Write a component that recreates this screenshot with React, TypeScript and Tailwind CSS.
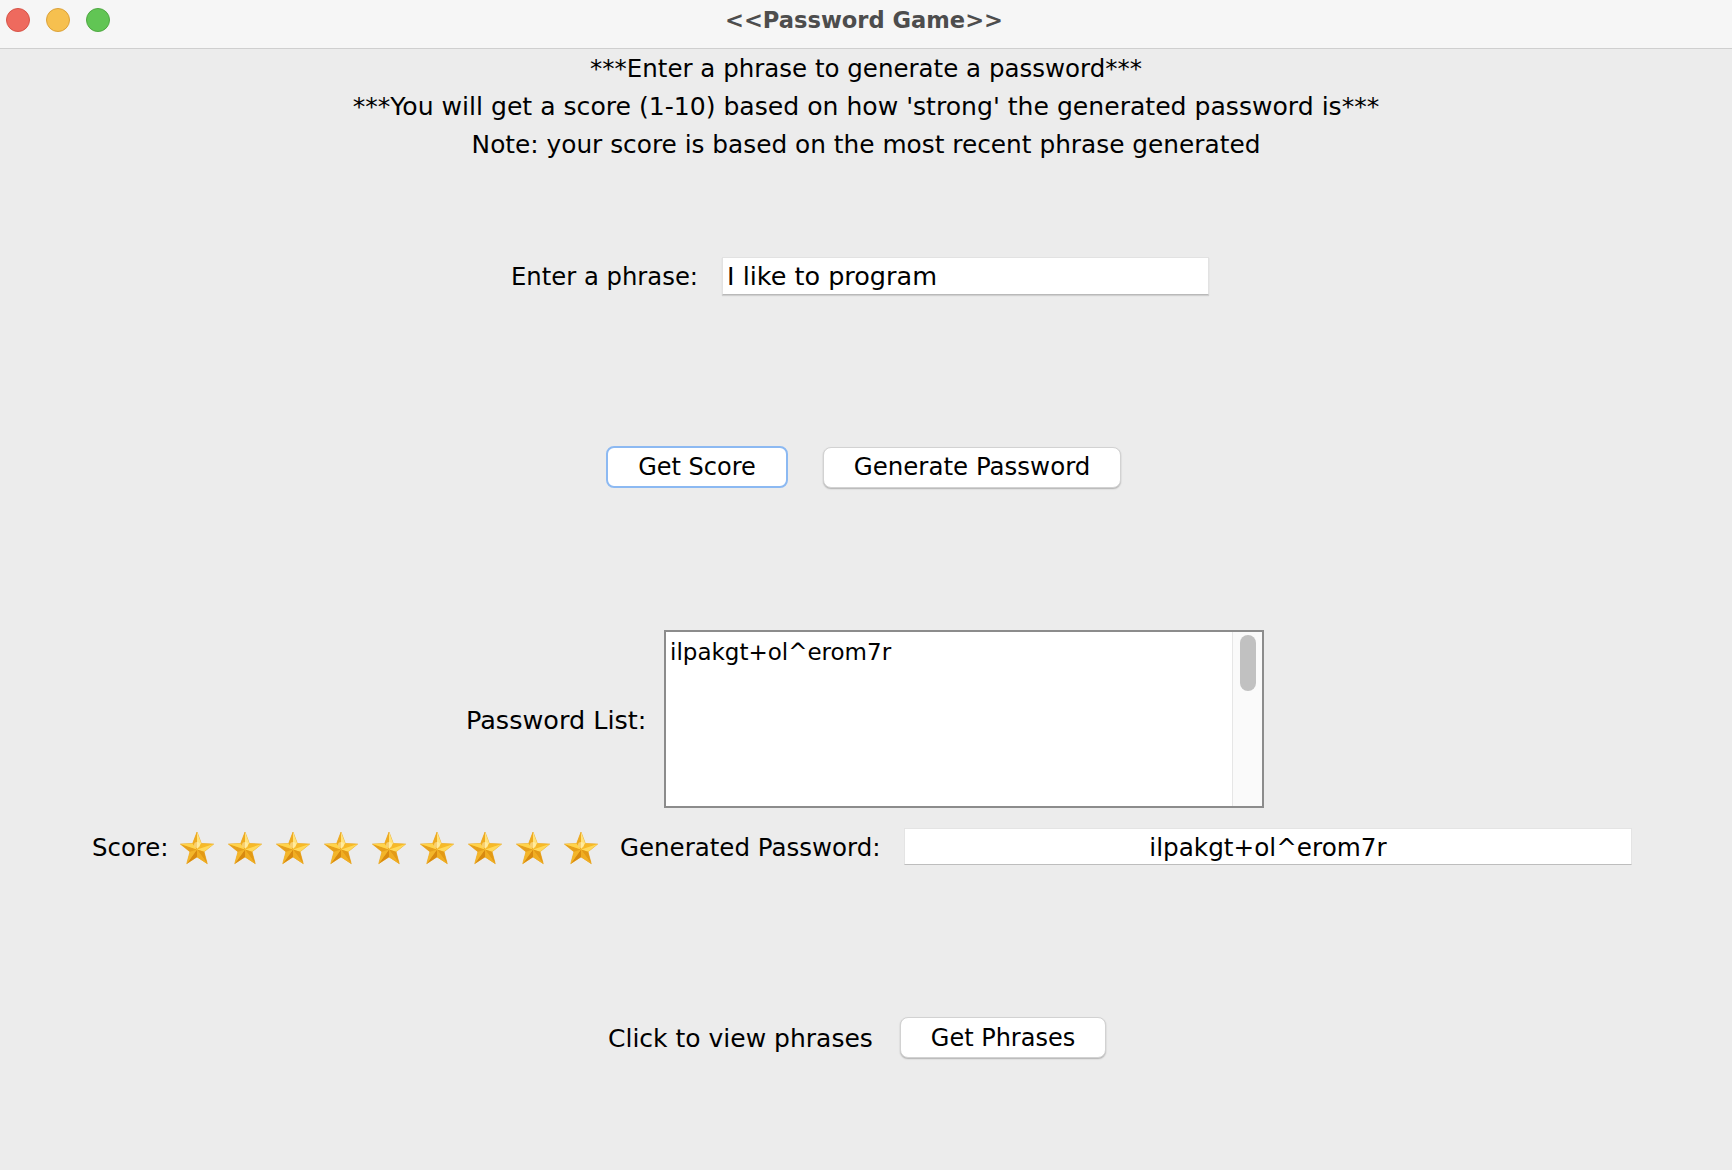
import React from 'react';

const FONT = { fontFamily: '"DejaVu Sans", "Liberation Sans", sans-serif' };

const starPoints = Array.from({ length: 10 }, (_, i) => {
  const a = ((-90 + 36 * i) * Math.PI) / 180;
  const r = i % 2 === 0 ? 17.5 : 7.4;
  return [18 + r * Math.cos(a), 18.5 + r * Math.sin(a)];
});

const facetColors = [
  '#ffe27a', '#f6b928', '#ffd95a', '#e39a16', '#f0ad22',
  '#d88a10', '#f3b52a', '#e6a01c', '#ffd34c', '#eeaa20',
];

function Star() {
  return (
    <svg width="36" height="34" viewBox="0 0 36 34" className="shrink-0">
      <polygon
        points={starPoints.map((p) => p.join(',')).join(' ')}
        fill="#f4b626"
        stroke="#e8a31f"
        strokeWidth="0.6"
        strokeLinejoin="round"
      />
      {starPoints.map((p, i) => {
        const q = starPoints[(i + 1) % 10];
        return (
          <polygon
            key={i}
            points={`18,18.5 ${p.join(',')} ${q.join(',')}`}
            fill={facetColors[i]}
          />
        );
      })}
      <circle cx="18" cy="14" r="3" fill="#fff4c0" opacity="0.5" />
    </svg>
  );
}

function MacButton({ label, width, size, focused }: { label: string; width: string; size: string; focused?: boolean }) {
  return (
    <button
      className={
        focused
          ? `${width} ${size} h-[42px] rounded-[8px] bg-white border-[2.5px] border-[#8cb9f2] text-black`
          : `${width} ${size} h-[41px] rounded-[8px] bg-white border border-[#d2d2d2] shadow-[0_1px_1.5px_rgba(0,0,0,0.25)] text-black`
      }
      style={FONT}
    >
      {label}
    </button>
  );
}

export default function App() {
  return (
    <div className="w-[1732px] h-[1170px] bg-[#ececec] flex flex-col overflow-hidden text-black" style={FONT}>
      <div className="h-[49px] shrink-0 bg-[#f6f6f6] border-b border-[#cfcfcf] flex items-start pt-[7px]">
        <div className="flex items-center gap-[16px] pl-[6px] pt-[1px]">
          <span className="w-[24px] h-[24px] rounded-full bg-[#ee6a5e] border border-[#d75448]" />
          <span className="w-[24px] h-[24px] rounded-full bg-[#f6c04f] border border-[#dca23a]" />
          <span className="w-[24px] h-[24px] rounded-full bg-[#61c554] border border-[#4fa842]" />
        </div>
        <div className="flex-1 text-center font-bold text-[22.6px] leading-[26px] text-[#4d4d4d] pr-[114px]">
          &lt;&lt;Password Game&gt;&gt;
        </div>
      </div>

      <div className="flex flex-col items-center leading-[38px] pt-[1px]">
        <div className="text-[24.5px]">***Enter a phrase to generate a password***</div>
        <div className="text-[25.1px]">***You will get a score (1-10) based on how 'strong' the generated password is***</div>
        <div className="text-[24.8px]">Note: your score is based on the most recent phrase generated</div>
      </div>

      <div className="flex items-center h-[38px] pl-[511px] mt-[93px]">
        <div className="w-[211px] text-[24.3px] leading-[30px] pt-[2px]">Enter a phrase:</div>
        <div className="w-[487px] h-[38px] bg-white border border-[#e2e2e2] border-b-[#b9b9b9] shadow-[0_1px_1px_rgba(0,0,0,0.12)] flex items-center pl-[4px] text-[25.5px]">
          I like to program
        </div>
      </div>

      <div className="flex items-center pl-[606px] mt-[151px] gap-[35px]">
        <MacButton label="Get Score" width="w-[182px]" size="text-[24px]" focused />
        <MacButton label="Generate Password" width="w-[298px]" size="text-[24.5px]" />
      </div>

      <div className="flex items-center pl-[466px] mt-[142px]">
        <div className="w-[198px] text-[25.5px] pt-[3px]">Password List:</div>
        <div className="w-[600px] h-[178px] bg-white border-2 border-[#8c8c8c] flex">
          <div className="flex-1 pl-[4px] pt-[5px] text-[23px] leading-[30px]">ilpakgt+ol^erom7r</div>
          <div className="w-[30px] h-full bg-[#fafafa] border-l border-[#e6e6e6] pt-[3px] pl-[7px]">
            <div className="w-[16px] h-[56px] rounded-full bg-[#c1c1c1]" />
          </div>
        </div>
      </div>

      <div className="flex items-center h-[37px] pl-[92px] mt-[20px]">
        <div className="w-[87px] text-[24.4px] leading-[30px] pt-[3px]">Score:</div>
        <div className="flex items-center gap-[12px] w-[441px] pt-[2px]">
          {Array.from({ length: 9 }, (_, i) => (
            <Star key={i} />
          ))}
        </div>
        <div className="w-[284px] text-[24.5px] leading-[30px] pt-[3px]">Generated Password:</div>
        <div className="w-[728px] h-[37px] bg-white border border-[#e4e4e4] border-b-[#bdbdbd] flex items-center justify-center text-[24.7px] pt-[2px]">
          ilpakgt+ol^erom7r
        </div>
      </div>

      <div className="flex items-center h-[41px] pl-[608px] mt-[152px]">
        <div className="w-[292px] text-[25px] leading-[30px] pt-[2px]">Click to view phrases</div>
        <MacButton label="Get Phrases" width="w-[206px]" size="text-[24px]" />
      </div>
    </div>
  );
}
